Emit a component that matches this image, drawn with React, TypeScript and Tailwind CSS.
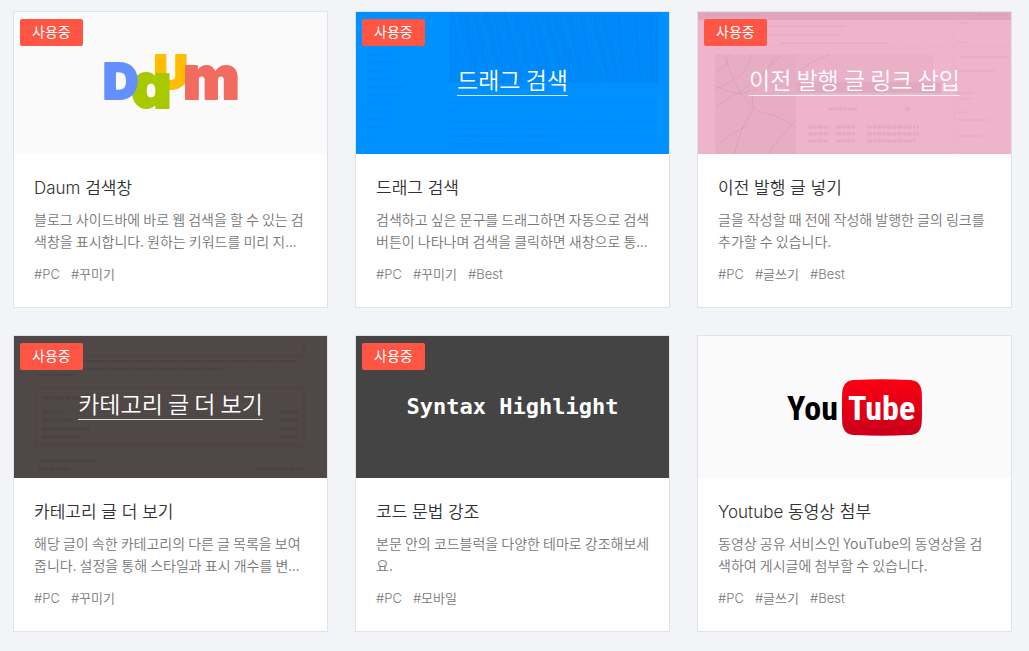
import React from 'react';

interface Plugin {
  id: string;
  title: string;
  description: string;
  tags: string[];
  active: boolean;
  thumbClass: string;
  thumb: React.ReactNode;
}

function DaumLogo() {
  return (
    <svg
      viewBox="0 0 134 56"
      className="w-[134px] h-14 overflow-visible font-['Inter',sans-serif] font-black"
      strokeWidth="2"
      strokeLinejoin="round"
      role="img"
      aria-label="Daum"
    >
      <text x="50" y="34" fontSize="47" fill="#ffbc00" stroke="#ffbc00">U</text>
      <text x="27" y="53" fontSize="63" fill="#a8c900" stroke="#a8c900" style={{ fontFeatureSettings: '"cv11"' }}>a</text>
      <text x="-1" y="44" fontSize="49" fill="#6490ff" stroke="#6490ff">D</text>
      <text x="79" y="44" fontSize="60" fill="#f26b61" stroke="#f26b61">m</text>
    </svg>
  );
}

function YoutubeLogo() {
  return (
    <svg viewBox="0 0 134 57" className="w-[134px] h-[57px] overflow-visible font-['Liberation_Sans_Narrow','Roboto_Condensed','DejaVu_Sans_Condensed',sans-serif] font-bold" role="img" aria-label="YouTube">
      <defs>
        <linearGradient id="tube" x1="0" y1="0" x2="0" y2="1">
          <stop offset="0" stopColor="#fb0012" />
          <stop offset="1" stopColor="#c9001a" />
        </linearGradient>
      </defs>
      <path
        d="M54 28C54 18 54 12 55 9C57 3 61 1 67 1C85 0 103 0 121 1C127 1 131 3 133 9C134 12 134 18 134 28C134 39 134 45 133 48C131 54 127 56 121 56C103 57 85 57 67 56C61 56 57 54 55 48C54 45 54 39 54 28Z"
        fill="url(#tube)"
      />
      <text x="-1" y="41" fontSize="34" fill="#000">You</text>
      <text x="60" y="41" fontSize="34" fill="#fff">Tube</text>
    </svg>
  );
}

function DragBackdrop() {
  return (
    <svg viewBox="0 0 313 142" preserveAspectRatio="xMidYMid slice" className="absolute inset-0 w-full h-full" fill="none" aria-hidden="true">
      <rect x="93" width="210" height="71" fill="#0068d8" opacity=".14" />
      <g stroke="#0059c4" strokeWidth="1" opacity=".16">
        <path d="M108 0l14 71M118 0l13 60M130 0l17 71M137 0l9 42M148 0l18 71M160 0l14 58M171 0l17 71M179 0l14 67M190 0l18 71M198 0l21 71M212 0l14 71M224 0l10 50M237 0l16 71M246 0l14 58M262 0l6 71M279 0l6 71M293 0l4 71" />
      </g>
      <g stroke="#17a1ff" opacity=".25">
        <path d="M99 0l14 71M124 0l17 71M152 0l20 71M183 0l20 71M206 0l20 71M230 0l20 71" />
      </g>
      <g stroke="#0068d8" strokeWidth="2" opacity=".1" strokeDasharray="4 1 7 1">
        <path d="M93 91h210M93 98h11M93 110h207M93 117h207M93 124h206M93 132h113" />
        <path d="M12 43h22M13 50h31M12 59h24M12 67h22M12 75h36M12 83h33M10 92h29M10 99h22M10 107h20M10 115h25M10 130h4" />
      </g>
    </svg>
  );
}

function LinkBackdrop() {
  return (
    <svg viewBox="0 0 313 142" preserveAspectRatio="xMidYMid slice" className="absolute inset-0 w-full h-full" fill="none" aria-hidden="true">
      <rect width="313" height="8" fill="#ba819b" opacity=".28" />
      <rect x="17" y="42" width="81" height="100" fill="#c98ea5" opacity=".18" />
      <rect x="98" y="42" width="137" height="28" fill="#c98ea5" opacity=".1" />
      <rect x="98" y="70" width="145" height="11" fill="#a06a84" opacity=".16" />
      <g stroke="#a36f89" opacity=".18">
        <path d="M17 78C30 70 50 66 53 42M18 94C40 80 65 70 78 42M26 42C34 66 42 84 56 96M17 74C36 82 44 84 52 78M56 96C46 112 38 128 37 142M56 96C66 104 76 99 97 116M56 96C48 78 70 58 84 42M18 134C29 124 40 119 50 113M17 60C24 58 29 52 31 42M70 142C79 128 88 120 98 108M98 62C110 51 119 48 132 42" />
      </g>
      <path d="M256 8v134M35 34h221M256 35h57" stroke="#b57994" strokeDasharray="1 2" opacity=".22" />
      <g stroke="#8e5570" strokeWidth="2" strokeDasharray="4 1 2 1" opacity=".08">
        <path d="M68 14h70M133 14h15M70 23h73M82 31h108M260 11h10M260 30h10M262 45h49M260 59h38M260 81h16M260 87h14M260 100h7M260 108h32M260 124h25M280 3h30M8 3h55" />
      </g>
      <g stroke="#8e5570" strokeWidth="3" strokeDasharray="5 1 3 1" opacity=".12">
        <path d="M130 97h29M207 97h6M110 115h21M138 115h19M169 115h52M110 122h21M138 122h19M169 122h52M110 129h21M138 129h19M169 129h48" />
      </g>
    </svg>
  );
}

function CategoryBackdrop() {
  return (
    <svg viewBox="0 0 313 142" preserveAspectRatio="xMidYMid slice" className="absolute inset-0 w-full h-full" fill="none" aria-hidden="true">
      <g stroke="#332a2a" opacity=".12">
        <path d="M24 20h266M290 2v18M22 52h268v58H22zM27 108h258" />
      </g>
      <g stroke="#2c2424" strokeWidth="2" strokeDasharray="4 1 6 1" opacity=".14">
        <path d="M68 25h216M68 33h140M24 39h38M24 125h58" />
      </g>
      <g stroke="#2c2424" strokeWidth="3" strokeDasharray="6 1 3 1" opacity=".14">
        <path d="M29 62h74M28 76h21M28 84h31M28 93h48M28 101h37M266 76h19M266 84h19M266 93h19M266 101h19M24 133h31M242 133h47" />
      </g>
    </svg>
  );
}

function ThumbText({ children }: { children: React.ReactNode }) {
  return (
    <span className="relative mb-1 border-b border-white/80 pb-1 text-[23px] leading-6 font-[350] text-white whitespace-nowrap">
      {children}
    </span>
  );
}

const plugins: Plugin[] = [
  {
    id: 'daum',
    title: 'Daum 검색창',
    description: '블로그 사이드바에 바로 웹 검색을 할 수 있는 검색창을 표시합니다. 원하는 키워드를 미리 지...',
    tags: ['PC', '꾸미기'],
    active: true,
    thumbClass: 'bg-[#fafafa]',
    thumb: <DaumLogo />,
  },
  {
    id: 'drag',
    title: '드래그 검색',
    description: '검색하고 싶은 문구를 드래그하면 자동으로 검색 버튼이 나타나며 검색을 클릭하면 새창으로 통...',
    tags: ['PC', '꾸미기', 'Best'],
    active: true,
    thumbClass: 'bg-[#0090ff]',
    thumb: (
      <>
        <DragBackdrop />
        <ThumbText>드래그 검색</ThumbText>
      </>
    ),
  },
  {
    id: 'prev-link',
    title: '이전 발행 글 넣기',
    description: '글을 작성할 때 전에 작성해 발행한 글의 링크를 추가할 수 있습니다.',
    tags: ['PC', '글쓰기', 'Best'],
    active: true,
    thumbClass: 'bg-[#eeb5ca]',
    thumb: (
      <>
        <LinkBackdrop />
        <ThumbText>이전 발행 글 링크 삽입</ThumbText>
      </>
    ),
  },
  {
    id: 'category',
    title: '카테고리 글 더 보기',
    description: '해당 글이 속한 카테고리의 다른 글 목록을 보여줍니다. 설정을 통해 스타일과 표시 개수를 변...',
    tags: ['PC', '꾸미기'],
    active: true,
    thumbClass: 'bg-[#504747]',
    thumb: (
      <>
        <CategoryBackdrop />
        <ThumbText>카테고리 글 더 보기</ThumbText>
      </>
    ),
  },
  {
    id: 'syntax',
    title: '코드 문법 강조',
    description: '본문 안의 코드블럭을 다양한 테마로 강조해보세요.',
    tags: ['PC', '모바일'],
    active: true,
    thumbClass: 'bg-[#444444]',
    thumb: (
      <span className="font-['DejaVu_Sans_Mono',monospace] text-[22px] leading-7 font-bold text-white whitespace-nowrap">
        Syntax Highlight
      </span>
    ),
  },
  {
    id: 'youtube',
    title: 'Youtube 동영상 첨부',
    description: '동영상 공유 서비스인 YouTube의 동영상을 검색하여 게시글에 첨부할 수 있습니다.',
    tags: ['PC', '글쓰기', 'Best'],
    active: false,
    thumbClass: 'bg-[#fafafa]',
    thumb: <YoutubeLogo />,
  },
];

function PluginCard({ plugin }: { plugin: Plugin }) {
  return (
    <li className="min-w-0">
      <a href={`#${plugin.id}`} className="block h-full border border-[#dfe2e8] bg-white">
        <div className={`relative flex h-[142px] items-center justify-center overflow-hidden ${plugin.thumbClass}`}>
          {plugin.thumb}
          {plugin.active && (
            <span className="absolute left-1.5 top-[7px] rounded-xs bg-[#ff5544] px-3 pb-0.5 text-sm leading-[25px] font-normal text-white">
              사용중
            </span>
          )}
        </div>
        <div className="pt-[22px] pr-[18px] pb-[23px] pl-5">
          <h3 className="font-['Inter','Noto_Sans_CJK_KR',sans-serif] text-[17px] leading-6 text-[#333]">{plugin.title}</h3>
          <p className="mt-2 text-sm leading-[22px] text-[#777] line-clamp-2">{plugin.description}</p>
          <div className="mt-3 flex gap-[11px] font-['Inter','Noto_Sans_CJK_KR',sans-serif] text-[13px] leading-5 text-[#777]">
            {plugin.tags.map((tag) => (
              <span key={tag}>{`#${tag}`}</span>
            ))}
          </div>
        </div>
      </a>
    </li>
  );
}

export default function App() {
  return (
    <main className="min-h-screen bg-[#f3f4f7] pt-[11px] pr-[17px] pb-5 pl-[13px] font-['Noto_Sans_CJK_KR',sans-serif] font-[350]">
      <ul className="grid grid-cols-3 gap-[27px]">
        {plugins.map((plugin) => (
          <PluginCard key={plugin.id} plugin={plugin} />
        ))}
      </ul>
    </main>
  );
}
